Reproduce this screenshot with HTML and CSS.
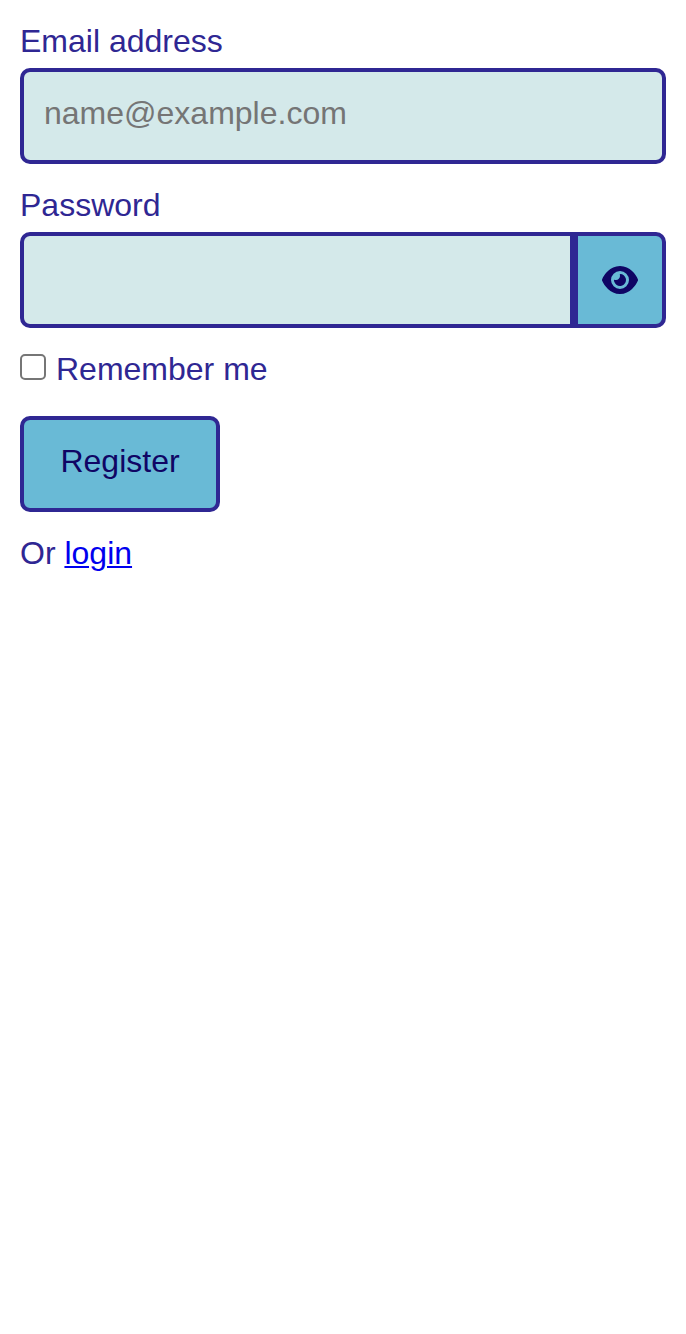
FILE: index.html
```html
<!DOCTYPE html>
<html lang="en">
<head>
<meta charset="utf-8">
<title>Register</title>
<link rel="stylesheet" href="styles.css">
</head>
<body>
<form class="form">
  <label class="label" for="email">Email address</label>
  <input class="input" id="email" type="email" placeholder="name@example.com">
  <label class="label" for="password">Password</label>
  <div class="group">
    <input class="input input-joined" id="password" type="password">
    <button class="reveal" type="button" aria-label="Show password">
      <svg class="eye" viewBox="0 0 576 512"><path fill="currentColor" d="M288 32c-80.8 0-145.500 36.800-192.600 80.600C48.600 156 17.300 208 2.500 243.700c-3.300 7.900-3.300 16.700 0 24.600C17.300 304 48.600 356 95.400 399.400C142.500 443.200 207.200 480 288 480s145.500-36.800 192.600-80.600c46.800-43.500 78.100-95.400 93-131.100c3.300-7.900 3.300-16.700 0-24.600c-14.900-35.700-46.200-87.700-93-131.100C433.500 68.800 368.800 32 288 32zM144 256a144 144 0 1 1 288 0a144 144 0 1 1-288 0zm144-64c0 35.300-28.700 64-64 64c-7.100 0-13.900-1.200-20.300-3.300c-5.500-1.800-11.900 1.600-11.700 7.400c.3 6.900 1.300 13.800 3.200 20.700c13.700 51.200 66.400 81.600 117.600 67.900s81.600-66.400 67.900-117.600c-11.100-41.500-47.800-69.400-88.600-71.100c-5.800-.2-9.200 6.100-7.400 11.700c2.100 6.400 3.300 13.200 3.300 20.300z"/></svg>
    </button>
  </div>
  <label class="check"><input class="checkbox" type="checkbox"><span>Remember me</span></label>
  <button class="submit" type="button">Register</button>
  <p class="alt">Or <a class="link" href="#">login</a></p>
</form>
</body>
</html>
```
FILE: styles.css
```css
body {
  margin: 0;
  background: #fff;
  color: #2f2793;
  font: 32px/34px "Liberation Sans", Arial, sans-serif;
}
.form {
  display: flex;
  flex-direction: column;
  padding: 24px 20px;
}
.label {
  height: 36px;
  margin-bottom: 8px;
}
.input {
  box-sizing: border-box;
  width: 100%;
  height: 96px;
  margin: 0 0 24px;
  padding: 15px 20px 21px;
  border: 4px solid #2f2793;
  border-radius: 10px;
  background: #d4e9ea;
  color: inherit;
  font: inherit;
  outline: none;
}
.input::placeholder {
  color: #757575;
}
.group {
  display: flex;
  height: 96px;
  margin-bottom: 24px;
}
.input-joined {
  flex: 1;
  min-width: 0;
  margin: 0;
  border-radius: 10px 0 0 10px;
}
.reveal {
  box-sizing: border-box;
  display: flex;
  align-items: center;
  justify-content: center;
  width: 92px;
  padding: 0;
  border: 4px solid #2f2793;
  border-radius: 0 10px 10px 0;
  background: #69bad6;
  color: #0f0564;
}
.eye {
  width: 36px;
  height: 32px;
}
.check {
  display: flex;
  gap: 10px;
  height: 36px;
  margin-bottom: 28px;
}
.checkbox {
  appearance: none;
  box-sizing: border-box;
  width: 26px;
  height: 26px;
  margin: 2px 0 0;
  border: 2px solid #767676;
  border-radius: 5px;
  background: #fff;
}
.submit {
  box-sizing: border-box;
  width: 200px;
  height: 96px;
  padding: 0 0 6px;
  border: 4px solid #2f2793;
  border-radius: 10px;
  background: #69bad6;
  color: #0f0564;
  font: inherit;
}
.alt {
  margin: 24px 0 0;
}
.link {
  color: #00e;
  text-decoration-thickness: 2px;
  text-underline-offset: 2px;
}
```
